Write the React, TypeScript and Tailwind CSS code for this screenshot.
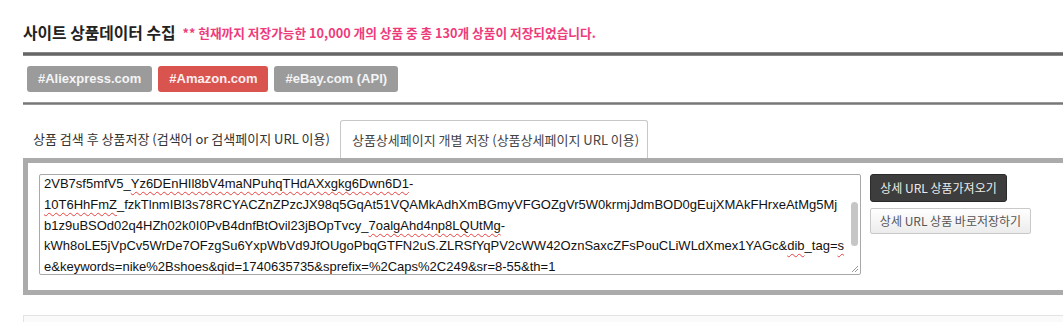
import React from "react"

const kr = { fontFamily: '"Noto Sans CJK KR", "Noto Sans", sans-serif' }
const arial = { fontFamily: '"Liberation Sans", Arial, sans-serif' }

function Sq({ children }: { children: React.ReactNode }) {
  return (
    <span className="underline decoration-wavy decoration-[#e8413f] decoration-1 underline-offset-[3px]">
      {children}
    </span>
  )
}

const sites = [
  { label: "#Aliexpress.com", active: false },
  { label: "#Amazon.com", active: true },
  { label: "#eBay.com (API)", active: false },
]

export default function App() {
  return (
    <div className="w-[1063px] h-[322px] overflow-hidden bg-white">
      <div className="pl-[23px] pt-[24px] w-[1100px]">
        {/* heading */}
        <div className="flex items-center h-[18px]" style={kr}>
          <h2 className="text-[15.8px] font-bold text-[#222] leading-[18px]">사이트 상품데이터 수집</h2>
          <span className="ml-[7px] text-[12.7px] font-bold text-[#ee3b7c] leading-[18px]">
            ** 현재까지 저장가능한 10,000 개의 상품 중 총 130개 상품이 저장되었습니다.
          </span>
        </div>

        <div className="mt-[10px] h-[4px] bg-[#666] border-y border-y-[#888]" />

        {/* site buttons */}
        <div className="mt-[10px] pl-[4px] flex gap-[6px]">
          {sites.map((s) => (
            <button
              key={s.label}
              style={arial}
              className={
                s.active
                  ? "h-[26px] px-[11px] rounded-[3px] bg-[#d9534f] text-[#fbeeee] text-[13px] font-bold"
                  : "h-[26px] px-[11px] rounded-[3px] bg-[#9b9b9b] text-[#f4f4f4] text-[13px] font-bold"
              }
            >
              {s.label}
            </button>
          ))}
        </div>

        <div className="mt-[10px] h-[3px] bg-[#777] border-y border-y-[#999]" />

        {/* tabs */}
        <div className="mt-[15px] flex items-end h-[38px] text-[13px]" style={kr}>
          <div className="h-full flex items-center px-[10px] text-[#333]">
            상품 검색 후 상품저장 (검색어 or 검색페이지 URL 이용)
          </div>
          <div className="h-full flex items-center pl-[11px] pr-[8px] border border-b-0 border-[#c8c8c8] rounded-t-[3px] bg-white text-[#444]">
            상품상세페이지 개별 저장 (상품상세페이지 URL 이용)
          </div>
        </div>

        {/* panel */}
        <div className="border-[5px] border-[#ababab] pt-[11px] pl-[11px] pb-[15px] flex">
          <div
            className="relative w-[822px] h-[101px] border border-[#a9a9a9] rounded-[2px] overflow-hidden pl-[4px] text-[13px] leading-[20.75px] text-[#111] whitespace-nowrap"
            style={arial}
          >
            <div className="-mt-[1px]">
              <div>
                2VB7sf5mfV5_<Sq>Yz6DEnHIl8bV4maNPuhqTHdAXxgkg6Dwn6D1</Sq>-
              </div>
              <div>
                <Sq>10T6HhFmZ</Sq>_fzkTlnmIBl3s78RCYACZnZPzcJX98q5GqAt51VQAMkAdhXmBGmyVFGOZgVr5W0krmjJdmBOD0gEujXMAkFHrxeAtMg5Mj
              </div>
              <div>
                b1z9uBSOd02q4HZh02k0I0PvB4dnfBtOvil23jBOpTvcy_<Sq>7oalgAhd4np8LQUtMg</Sq>-
              </div>
              <div>
                kWh8oLE5jVpCv5WrDe7OFzgSu6YxpWbVd9JfOUgoPbqGTFN2uS.ZLRSfYqPV2cWW42OznSaxcZFsPouCLiWLdXmex1YAGc&<Sq>dib</Sq>_tag=<Sq>s</Sq>
              </div>
              <div>
                <Sq>e</Sq>&keywords=<Sq>nike</Sq>%<Sq>2Bshoes</Sq>&<Sq>qid</Sq>=1740635735&<Sq>sprefix</Sq>=%
                <Sq>2Caps</Sq>%<Sq>2C249</Sq>&sr=8-55&<Sq>th</Sq>=1
              </div>
            </div>
            {/* scrollbar thumb */}
            <div className="absolute right-[2px] top-[27px] w-[7px] h-[44px] rounded-[4px] bg-[#c6c6c6]" />
            {/* resize grip */}
            <svg className="absolute right-[1px] bottom-[1px]" width="9" height="9" viewBox="0 0 9 9">
              <path d="M8 2 L2 8 M8 5 L5 8" stroke="#999" strokeWidth="1" />
            </svg>
          </div>

          <div className="ml-[9px] flex flex-col items-start gap-[6px] text-[12px]" style={kr}>
            <button className="h-[28px] w-[137px] rounded-[3px] bg-[#3d3d3d] border border-[#2a2a2a] text-[#ececec]">
              상세 URL 상품가져오기
            </button>
            <button className="h-[26px] w-[161px] rounded-[2px] border border-[#c9c9c9] bg-gradient-to-b from-white to-[#ececec] text-[#555]">
              상세 URL 상품 바로저장하기
            </button>
          </div>
        </div>

        <div className="mt-[20px] h-[40px] border border-[#e3e3e3] bg-[#fafafa]" />
      </div>
    </div>
  )
}
